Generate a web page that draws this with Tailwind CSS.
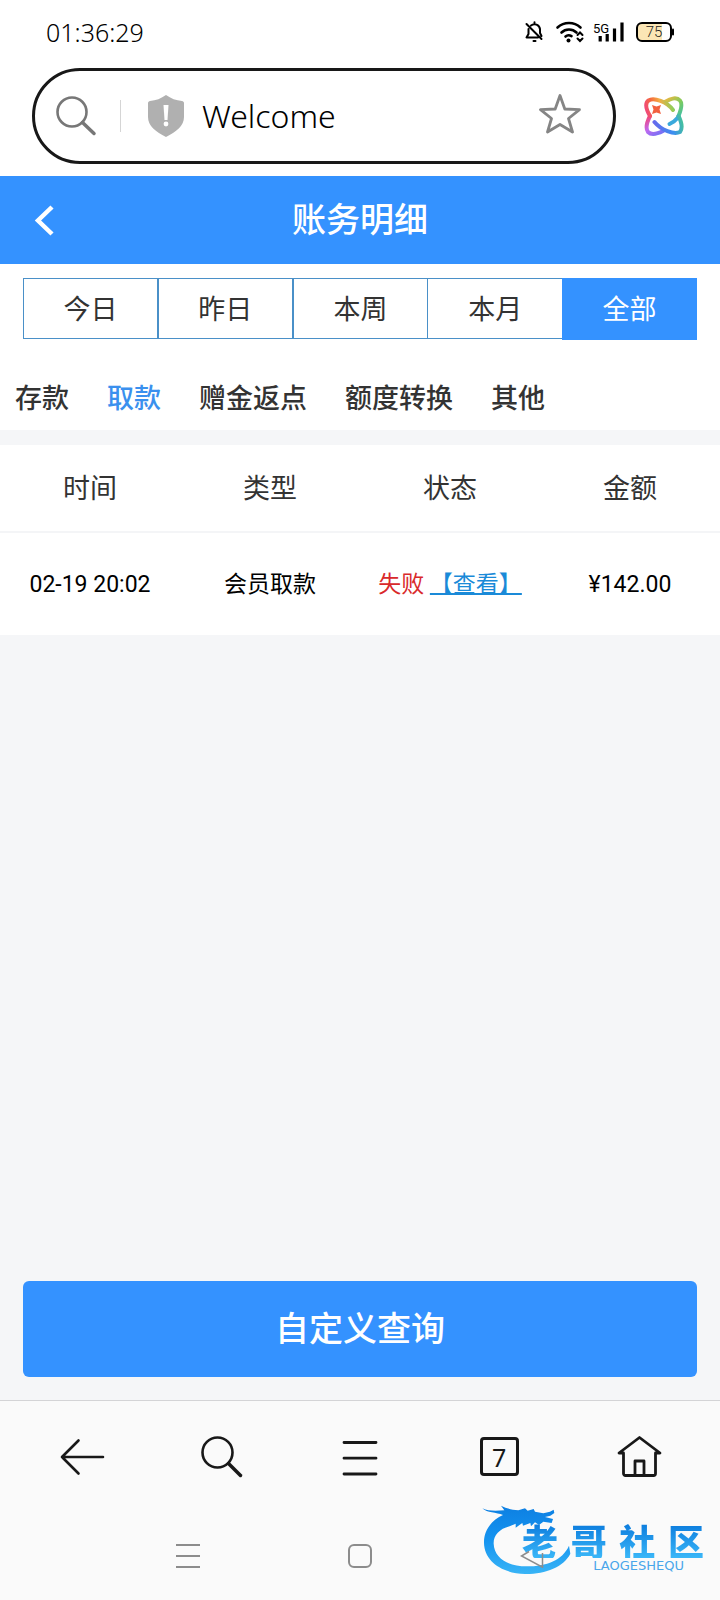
<!DOCTYPE html>
<html lang="zh-CN">
<head>
<meta charset="utf-8">
<meta name="viewport" content="width=device-width, initial-scale=1">
<title>账务明细</title>
<script src="https://cdn.jsdelivr.net/npm/@tailwindcss/browser@4"></script>
</head>
<body class="flex min-h-screen flex-col bg-[#f5f6f8] font-['Roboto','Noto_Sans_CJK_SC',sans-serif] text-[#333]">

<div class="bg-white">
  <div class="flex h-16 items-center justify-between pr-[45px] pl-[46px]">
    <time class="font-['Noto_Sans',sans-serif] text-[25px] leading-8 font-light text-black">01:36:29</time>
    <div class="flex items-center gap-2 text-black">
      <svg class="h-6 w-[22px]" viewBox="0 0 22 24" fill="none" stroke="currentColor" stroke-width="2" stroke-linecap="round" stroke-linejoin="round" aria-label="静音">
        <path d="M5.500 9v5L3.500 17.500H15M8 5.500A5.500 5.500 0 0 1 17 9v4l1.500 3M3.500 4l15 15M11.500 2.200v.6M10.500 21h2"/>
      </svg>
      <svg class="h-6 w-8" viewBox="0 0 32 24" fill="none" stroke="currentColor" stroke-width="2.600" stroke-linecap="round" aria-label="无线网络">
        <path d="M4.500 7.500C11 1.500 21 1.500 27.500 7.500M8.500 12.500c4-4 11-4 15 0M12.500 16.500c1.500-1.300 4-1.500 6-.3"/>
        <circle cx="15.500" cy="20.500" r="2" fill="currentColor" stroke="none"/>
        <path d="m24.500 15 2.500-2.500 2.500 2.500M24.500 18.500l2.500 2.500 2.500-2.500" stroke-width="2"/>
      </svg>
      <svg class="h-6 w-[34px]" viewBox="0 0 34 24" aria-label="5G 信号">
        <text x="0" y="13" font-size="13" fill="currentColor">5G</text>
        <path d="M7.200 17.500V20M14.200 15.500V20M21.500 10v10M29 4v16" stroke="currentColor" stroke-width="3.200" stroke-linecap="square"/>
      </svg>
      <svg class="h-6 w-10" viewBox="0 0 40 24" aria-label="电量 75">
        <rect x="2" y="3" width="34" height="18" rx="5" fill="#fff"/>
        <path d="M7 3h20v18H7a5 5 0 0 1-5-5V8a5 5 0 0 1 5-5Z" fill="#fbe6b5"/>
        <rect x="2" y="3" width="34" height="18" rx="5" fill="none" stroke="#000" stroke-width="2"/>
        <path d="M38 9.500v5" stroke="#000" stroke-width="2" stroke-linecap="round"/>
        <text x="19" y="17" text-anchor="middle" font-size="15" font-weight="300" fill="#222">75</text>
      </svg>
    </div>
  </div>

  <div class="flex items-center gap-7 pt-1 pr-9 pb-3 pl-8">
    <form class="flex h-24 min-w-0 flex-1 items-center rounded-full border-[3px] border-[#181818] pr-[31px] pl-5">
      <button type="button" aria-label="搜索" class="shrink-0">
        <svg class="size-11" viewBox="0 0 44 44" fill="none" stroke="#777" stroke-width="2.600" stroke-linecap="round"><circle cx="17" cy="18" r="14.500"/><path d="m27.500 28.500 11.500 11" stroke-width="3.500"/></svg>
      </button>
      <span class="mr-6 ml-[21px] h-8 w-px shrink-0 bg-[#d5d5d5]"></span>
      <svg class="h-[42px] w-10 shrink-0" viewBox="-1 0 40 42"><path d="M20 0c5 3.500 10 5.500 16 6 1 0 2 1 2 2v14c0 9-8 15-18 20C10 37 2 31 2 22V8c0-1 1-2 2-2 6-.5 11-2.500 16-6Z" fill="#b0b0b0"/><path d="M17.500 10h5l-1 15h-3Z" fill="#fff"/><circle cx="20" cy="29" r="2.400" fill="#fff"/></svg>
      <input type="text" value="Welcome" aria-label="地址" class="ml-[17px] min-w-0 flex-1 bg-transparent font-['Noto_Sans',sans-serif] text-[32px] leading-10 font-light text-black outline-none">
      <button type="button" aria-label="收藏" class="shrink-0">
        <svg class="size-11" viewBox="0 0 44 44" fill="none" stroke="#858585" stroke-width="2.800" stroke-linejoin="round"><path d="m22 1.500 4.800 13.500 14.700.7L30.500 24.500 34.500 38 22 30.500 9.500 38l4-13.500L2.500 15.700l14.700-.7Z"/></svg>
      </button>
    </form>
    <button type="button" aria-label="浏览器助手" class="shrink-0">
      <svg class="size-10" viewBox="-1 -1 40 40" fill="none" stroke-width="4" stroke-linecap="round">
        <defs>
          <linearGradient id="tl" gradientUnits="userSpaceOnUse" x1="2" y1="18" x2="28" y2="10"><stop stop-color="#f0487c"/><stop offset=".3" stop-color="#f56a3c"/><stop offset=".6" stop-color="#f2ad45"/><stop offset="1" stop-color="#8ccf5a"/></linearGradient>
          <linearGradient id="tr" gradientUnits="userSpaceOnUse" x1="20" y1="3" x2="34" y2="20"><stop stop-color="#e6b840"/><stop offset=".5" stop-color="#7fcc5c"/><stop offset="1" stop-color="#45c0a0"/></linearGradient>
          <linearGradient id="br" gradientUnits="userSpaceOnUse" x1="36" y1="20" x2="8" y2="28"><stop stop-color="#45c0a0"/><stop offset=".4" stop-color="#3b8ff0"/><stop offset="1" stop-color="#6a66ec"/></linearGradient>
          <linearGradient id="bl" gradientUnits="userSpaceOnUse" x1="4" y1="19" x2="16" y2="36"><stop stop-color="#f0487c"/><stop offset=".5" stop-color="#c069f0"/><stop offset="1" stop-color="#7a70f4"/></linearGradient>
        </defs>
        <path d="M18 34C12 37 6 38 3 35 0 31 2 25 5 19" stroke="url(#bl)"/>
        <path d="M20 5C26 1 32 0 35 3.500 38 7 36 13 33.500 19" stroke="url(#tr)"/>
        <path d="M33.500 20C31 23 28 25.500 24.500 27" stroke="#3aa9dc"/>
        <path d="M33.500 19C37 26 38 31 35 35 29 38 16 33 9.500 25" stroke="url(#br)"/>
        <path d="M5 19C1 12 0 6 3.500 3.500 9 0 22 5 28 13" stroke="url(#tl)"/>
        <path d="m7 8 4.500 1.500L16 8l-1.500 4.500L16 17l-4.500-1.500L7 17l1.500-4.500Z" fill="#f2603f"/>
      </svg>
    </button>
  </div>
</div>

<header class="grid h-22 grid-cols-[88px_1fr_88px] items-center bg-[#3492ff] text-white">
  <button type="button" aria-label="返回" class="flex h-full items-center pl-8">
    <svg class="h-8 w-6" viewBox="0 0 24 32" fill="none" stroke="currentColor" stroke-width="4.500"><path d="M20 3 6 16.500 20 30"/></svg>
  </button>
  <h1 class="text-center text-[34px] leading-11 font-medium">账务明细</h1>
</header>

<main class="flex flex-1 flex-col">
  <section class="bg-white px-[23px] pt-[14px]">
    <div class="grid h-[62px] grid-cols-5 text-[27px] leading-9">
      <button type="button" class="mb-px border border-[#4a90c8] pt-[2px]">今日</button>
      <button type="button" class="mb-px border border-[#4a90c8] pt-[2px]">昨日</button>
      <button type="button" class="mb-px border border-r-0 border-[#4a90c8] pt-[2px]">本周</button>
      <button type="button" class="mb-px border border-r-0 border-[#4a90c8] pt-[2px]">本月</button>
      <button type="button" aria-pressed="true" class="bg-[#3492ff] pt-px text-white">全部</button>
    </div>
  </section>

  <nav class="flex h-[90px] items-center gap-[38px] bg-white px-[15px] pt-7 text-[27px] leading-9 font-medium">
    <a href="#deposit">存款</a>
    <a href="#withdraw" aria-current="page" class="text-[#3a90ee]">取款</a>
    <a href="#bonus">赠金返点</a>
    <a href="#transfer">额度转换</a>
    <a href="#other">其他</a>
  </nav>

  <table class="mt-[15px] w-full table-fixed bg-white text-center">
    <thead>
      <tr class="h-[87px] border-b-2 border-[#f4f5f7] text-[27px] leading-9">
        <th scope="col" class="pt-[3px] pb-px font-normal">时间</th>
        <th scope="col" class="pt-[3px] pb-px font-normal">类型</th>
        <th scope="col" class="pt-[3px] pb-px font-normal">状态</th>
        <th scope="col" class="pt-[3px] pb-px font-normal">金额</th>
      </tr>
    </thead>
    <tbody>
      <tr class="h-[103px] text-[23px] leading-8 whitespace-nowrap text-black">
        <td class="pt-[2px]">02-19 20:02</td>
        <td class="pt-[2px]">会员取款</td>
        <td class="pt-[2px]"><span class="text-[#d9292b]">失败</span> <a href="#detail" class="text-[#1a8ad8] underline decoration-2">【查看】</a></td>
        <td class="pt-[2px]">¥142.00</td>
      </tr>
    </tbody>
  </table>

  <div class="mt-auto px-[23px] pb-[23px]">
    <button type="button" class="h-24 w-full rounded-md bg-[#3492ff] text-[34px] leading-11 font-medium text-white">自定义查询</button>
  </div>
</main>

<footer class="relative border-t border-[#d4d4d6] bg-[#fafafa]">
  <nav class="grid h-[111px] grid-cols-5 items-center justify-items-center px-3 text-[#181818]">
    <button type="button" aria-label="后退">
      <svg class="size-12" viewBox="0 0 48 48" fill="none" stroke="currentColor" stroke-width="2.600" stroke-linecap="round" stroke-linejoin="round"><path d="M45 24H4M20.500 7.500 4 24l16.500 16.500"/></svg>
    </button>
    <button type="button" aria-label="搜索网页">
      <svg class="size-12" viewBox="0 0 48 48" fill="none" stroke="currentColor" stroke-width="2.600" stroke-linecap="round"><circle cx="20.500" cy="19.500" r="15"/><path d="m31.500 30.500 12 12" stroke-width="3.500"/></svg>
    </button>
    <button type="button" aria-label="菜单">
      <svg class="size-12" viewBox="0 0 48 48" fill="none" stroke="currentColor" stroke-width="2.800" stroke-linecap="round"><path d="M8 9.500h32M8 25.200h32M8 41h32"/></svg>
    </button>
    <button type="button" aria-label="标签页" class="flex size-[39px] items-center justify-center rounded-[4px] border-[3px] border-current font-['Noto_Sans',sans-serif] text-[25px] leading-8">7</button>
    <button type="button" aria-label="主页">
      <svg class="size-12" viewBox="-1 0 48 48" fill="none" stroke="currentColor" stroke-width="2.800" stroke-linejoin="round" stroke-linecap="round"><path d="M8.500 20H4L24.500 4.500 45 20h-4.500v20.500a2 2 0 0 1-2 2h-28a2 2 0 0 1-2-2ZM20 42V28h9v14"/></svg>
    </button>
  </nav>
  <div class="flex h-[88px] items-center justify-center text-[#8c8c8c]">
    <button type="button" aria-label="最近任务" class="flex w-43 justify-center">
      <svg class="size-6" viewBox="0 0 24 24" stroke="currentColor" stroke-width="2"><path d="M0 1h24M0 12h24M0 23h24"/></svg>
    </button>
    <button type="button" aria-label="主屏幕" class="flex w-43 justify-center"><span class="size-6 rounded-[6px] border-2 border-current"></span></button>
    <button type="button" aria-label="返回上一级" class="relative z-10 flex w-43 justify-center">
      <svg class="size-6" viewBox="0 0 24 24" fill="none" stroke="currentColor" stroke-width="1.500"><path d="M9 7.500 1.500 12 22.500 23.200V9"/></svg>
    </button>
  </div>

  <div class="pointer-events-none absolute right-4 bottom-[15px] h-[90px] w-[222px]">
    <svg class="h-[90px] w-[222px]" viewBox="21 0 666 270" aria-hidden="true">
      <defs><linearGradient id="dragon" x1="0" y1="0" x2="0" y2="1"><stop stop-color="#0d7fe2"/><stop offset=".5" stop-color="#1594f0"/><stop offset="1" stop-color="#38b4f6"/></linearGradient></defs>
      <path fill="url(#dragon)" d="M22 40C40 49 64 48 88 46L78 32C94 40 110 44 130 46L150 40 158 47 176 42 180 50 205 55 225 50 236 44 238 54 226 62 210 66 234 72 230 84 205 80 192 90 180 82 168 94 166 84 144 92 142 84 122 98 122 86 104 94C72 102 55 122 56 146 58 190 100 214 155 214 215 214 262 196 282 152L286 176C266 216 210 238 150 237 80 235 28 198 27 144 26 104 52 74 84 60 64 52 36 54 22 40Z"/>
    </svg>
    <div class="absolute top-[27px] right-0 flex w-[182px] justify-between bg-linear-to-b from-[#0879dc] to-[#3ab7f8] bg-clip-text font-['Noto_Sans_CJK_SC',sans-serif] text-[36px] leading-9 font-black text-transparent"><span>老</span><span>哥</span><span>社</span><span>区</span></div>
    <div class="absolute right-5 bottom-[13px] font-['DejaVu_Sans',sans-serif] text-[13px] leading-3 text-[#49a6ea]">LAOGESHEQU</div>
  </div>
</footer>
</body>
</html>
